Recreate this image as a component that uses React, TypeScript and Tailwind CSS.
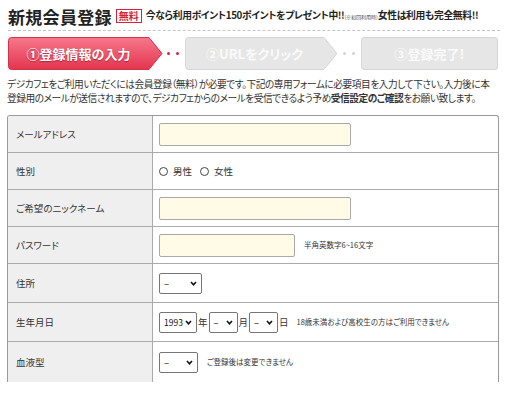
import React from "react";

const Chevron = () => (
  <svg width="7" height="5" viewBox="0 0 7 5" className="ml-auto shrink-0">
    <path d="M1 1 L3.5 3.8 L6 1" fill="none" stroke="#111" strokeWidth="1.6" />
  </svg>
);

const Select = ({ w, value, small }: { w: string; value: string; small?: boolean }) => (
  <div
    className={`${w} h-[21px] shrink-0 flex items-center border border-[#767676] rounded-[2px] bg-white pl-[4px] pr-[4px] ${small ? "text-[8.5px]" : "text-[9.5px]"} text-[#111] whitespace-nowrap`}
  >
    <span>{value}</span>
    <Chevron />
  </div>
);

const Input = ({ w }: { w: string }) => (
  <div className={`${w} h-[23px] shrink-0 border border-[#a9a9a9] rounded-[2px] bg-[#fffbe6]`} />
);

const Radio = () => (
  <span className="inline-block w-[9px] h-[9px] rounded-full border border-[#444] bg-white" />
);

const Row = ({
  label,
  h,
  last,
  children,
}: {
  label: string;
  h: string;
  last?: boolean;
  children?: React.ReactNode;
}) => (
  <div className={`flex ${h} ${last ? "" : "border-b border-[#aaaaaa]"}`}>
    <div className="w-[145px] shrink-0 bg-[#efefef] border-r border-[#aaaaaa] flex items-center pl-[8px] text-[9.5px] text-[#333] whitespace-nowrap">
      {label}
    </div>
    <div className="flex-1 flex items-center pl-[6px] text-[9.5px] text-[#333] whitespace-nowrap">{children}</div>
  </div>
);

export default function App() {
  return (
    <div className="w-[510px] h-[398px] bg-white overflow-hidden font-['Noto_Sans_CJK_JP',sans-serif] text-[#333] [font-feature-settings:'palt']">
      <div className="pl-[8px] pr-[10px] pt-[5px]">
        {/* header */}
        <div className="flex items-center h-[22px] whitespace-nowrap">
          <span className="shrink-0 text-[17px] font-bold text-[#222] leading-none tracking-[0.3px]">新規会員登録</span>
          <span className="shrink-0 ml-[4px] border border-[#d6223a] text-[#d6223a] text-[10px] font-bold leading-none px-[2px] py-[1px]">
            無料
          </span>
          <span className="shrink-0 ml-[4px] text-[9.8px] font-bold text-[#222] leading-none tracking-[-0.35px]">
            今なら利用ポイント150ポイントをプレゼント中!!
          </span>
          <span className="shrink-0 text-[5px] text-[#444] leading-none">(※初回利用時)</span>
          <span className="shrink-0 text-[9.8px] font-bold text-[#222] leading-none tracking-[-0.35px]">女性は利用も完全無料!!</span>
        </div>
        <div className="mt-[3px] border-b border-dashed border-[#c4c4c4]" />

        {/* steps */}
        <div className="flex items-center mt-[6px] h-[33px]">
          <div className="relative w-[155px] h-[33px] shrink-0">
            <svg width="155" height="33" className="absolute left-0 top-0">
              <defs>
                <linearGradient id="rg" x1="0" y1="0" x2="0" y2="1">
                  <stop offset="0" stopColor="#f7788b" />
                  <stop offset="1" stopColor="#e2354f" />
                </linearGradient>
              </defs>
              <path
                d="M3.5 0.5 H141 L154 16.5 L141 32.5 H3.5 Q0.5 32.5 0.5 29.5 V3.5 Q0.5 0.5 3.5 0.5 Z"
                fill="url(#rg)"
                stroke="#d3324b"
              />
            </svg>
            <div className="relative w-[141px] h-full flex items-center justify-center text-white font-bold text-[13px] whitespace-nowrap [text-shadow:0_1px_1px_rgba(120,0,20,0.5)]">
              ①登録情報の入力
            </div>
          </div>
          <div className="w-[22px] flex items-center pl-[4px] gap-[6px]">
            <span className="w-[3px] h-[3px] rounded-full bg-[#d8253f]" />
            <span className="w-[3px] h-[3px] rounded-full bg-[#d8253f]" />
          </div>
          <div className="relative w-[153px] h-[33px] shrink-0">
            <svg width="153" height="33" className="absolute left-0 top-0">
              <path
                d="M3.5 0.5 H139 L152 16.5 L139 32.5 H3.5 Q0.5 32.5 0.5 29.5 V3.5 Q0.5 0.5 3.5 0.5 Z"
                fill="#e6e6e6"
                stroke="#d6d6d6"
              />
            </svg>
            <div className="relative w-[139px] h-full flex items-center justify-center text-[#fafafa] font-bold text-[13px] whitespace-nowrap">
              ②URLをクリック
            </div>
          </div>
          <div className="w-[23px] flex items-center pl-[5px] gap-[6px]">
            <span className="w-[3px] h-[3px] rounded-full bg-[#d4d4d4]" />
            <span className="w-[3px] h-[3px] rounded-full bg-[#d4d4d4]" />
          </div>
          <div className="w-[137px] h-[33px] shrink-0 rounded-[3px] bg-[#e6e6e6] border border-[#d6d6d6] flex items-center justify-center text-[#fafafa] font-bold text-[13px] whitespace-nowrap">
            ③登録完了!
          </div>
        </div>

        {/* description */}
        <div className="mt-[7px] text-[9.7px] leading-[14px] tracking-[-0.45px] text-[#333] -ml-[1px] whitespace-nowrap">
          デジカフェをご利用いただくには会員登録（無料）が必要です。下記の専用フォームに必要項目を入力して下さい。入力後に本
          <br />
          登録用のメールが送信されますので、デジカフェからのメールを受信できるよう予め
          <span className="font-bold">受信設定のご確認</span>をお願い致します。
        </div>

        {/* table */}
        <div className="mt-[10px] w-[492px] -ml-[1px] border border-[#999] border-b-0 rounded-t-[3px] overflow-hidden">
          <Row label="メールアドレス" h="h-[37px]">
            <Input w="w-[192px]" />
          </Row>
          <Row label="性別" h="h-[37px]">
            <div className="flex items-center">
              <Radio />
              <span className="ml-[5px]">男性</span>
              <span className="ml-[8px]" />
              <Radio />
              <span className="ml-[5px]">女性</span>
            </div>
          </Row>
          <Row label="ご希望のニックネーム" h="h-[37px]">
            <Input w="w-[192px]" />
          </Row>
          <Row label="パスワード" h="h-[37px]">
            <Input w="w-[136px]" />
            <span className="ml-[9px] text-[7.5px]">半角英数字6~16文字</span>
          </Row>
          <Row label="住所" h="h-[39px]">
            <Select w="w-[43px]" value="–" />
          </Row>
          <Row label="生年月日" h="h-[39px]">
            <Select w="w-[38px]" value="1993" small />
            <span className="mx-[1px]">年</span>
            <Select w="w-[29px]" value="–" />
            <span className="mx-[1px]">月</span>
            <Select w="w-[29px]" value="–" />
            <span className="ml-[1px]">日</span>
            <span className="ml-[8px] text-[7.5px]">18歳未満および高校生の方はご利用できません</span>
          </Row>
          <Row label="血液型" h="h-[40px]" last>
            <Select w="w-[39px]" value="–" />
            <span className="ml-[9px] text-[7.5px]">ご登録後は変更できません</span>
          </Row>
        </div>
      </div>
    </div>
  );
}
